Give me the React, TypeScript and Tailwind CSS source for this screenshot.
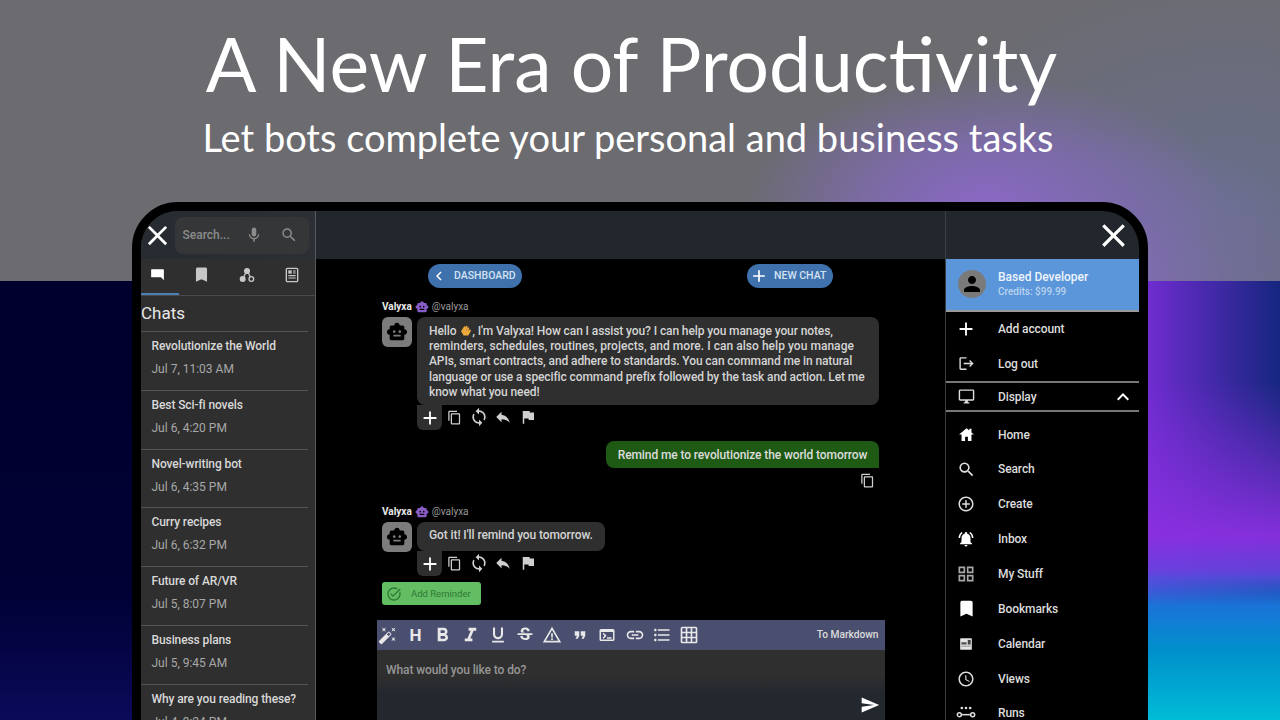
import React from "react";
import {
  MdClose, MdMic, MdSearch, MdBookmark, MdChevronLeft, MdAdd, MdContentCopy, MdSync, MdReply, MdFlag,
  MdAutoFixHigh, MdFormatBold, MdFormatItalic, MdFormatUnderlined, MdStrikethroughS, MdWarningAmber, MdFormatQuote,
  MdLink, MdFormatListBulleted, MdGridOn, MdSend, MdPerson, MdLogout, MdOutlineDesktopWindows, MdExpandLess,
  MdAddCircleOutline, MdNotificationsActive, MdOutlineGridView, MdOutlineSchedule,
  MdSmartToy, MdOutlineTaskAlt, MdOutlineTerminal,
} from "react-icons/md";

const chats = [
  ["Revolutionize the World", "Jul 7, 11:03 AM"],
  ["Best Sci-fi novels", "Jul 6, 4:20 PM"],
  ["Novel-writing bot", "Jul 6, 4:35 PM"],
  ["Curry recipes", "Jul 6, 6:32 PM"],
  ["Future of AR/VR", "Jul 5, 8:07 PM"],
  ["Business plans", "Jul 5, 9:45 AM"],
  ["Why are you reading these?", "Jul 4, 9:24 PM"],
];

function ChatTail({ className }: { className?: string }) {
  return (
    <svg viewBox="0 0 24 24" className={className} fill="currentColor">
      <path d="M3 5.500Q3 4.500 4 4.500h16q1 0 1 1V20l-4-4H4q-1 0-1-1z" />
    </svg>
  );
}

function Nodes({ className }: { className?: string }) {
  return (
    <svg viewBox="0 0 24 24" className={className} fill="currentColor">
      <circle cx="12" cy="6" r="4.500" />
      <circle cx="5.500" cy="18" r="4.500" />
      <circle cx="18.500" cy="18" r="3.500" fill="none" stroke="currentColor" strokeWidth="2" />
      <path d="M10 9l-3 6M14 9l3 6" stroke="currentColor" strokeWidth="2" />
    </svg>
  );
}

function Article({ className }: { className?: string }) {
  return (
    <svg viewBox="0 0 24 24" className={className}>
      <rect x="3.500" y="2" width="17" height="20" rx="1.500" fill="none" stroke="currentColor" strokeWidth="2" />
      <rect x="6.500" y="5" width="5" height="5" fill="currentColor" />
      <path d="M13.500 6h4M13.500 9h4M6.500 13h11M6.500 16.500h11" stroke="currentColor" strokeWidth="1.800" />
    </svg>
  );
}

function Runs({ className }: { className?: string }) {
  return (
    <svg viewBox="0 0 24 24" className={className} fill="none" stroke="currentColor" strokeWidth="1.800">
      <circle cx="7" cy="6" r="1.600" fill="currentColor" stroke="none" />
      <circle cx="12" cy="6" r="1.600" fill="currentColor" stroke="none" />
      <circle cx="17" cy="6" r="1.600" fill="currentColor" stroke="none" />
      <circle cx="4" cy="14" r="2.400" />
      <circle cx="20" cy="14" r="2.400" />
      <path d="M6.500 14h11" />
    </svg>
  );
}

function CalendarIcon({ className }: { className?: string }) {
  return (
    <svg viewBox="0 0 24 24" className={className}>
      <rect x="2" y="2" width="20" height="20" rx="1.500" fill="#e4e4e4" />
      <rect x="4" y="9" width="9" height="4" fill="#555" />
      <rect x="15" y="5" width="5" height="8" fill="#444" />
      <rect x="4" y="15" width="16" height="1.500" fill="#888" />
    </svg>
  );
}

function HomeIcon({ className }: { className?: string }) {
  return (
    <svg viewBox="0 0 24 24" className={className} fill="currentColor">
      <path d="M12 3L1.500 12H5v9h5v-6h4v6h5v-9h3.500L19 9V4h-3v2.300z" />
    </svg>
  );
}

function Wave() {
  return (
    <svg viewBox="0 0 16 16" className="inline-block w-[13px] h-[13px] align-[-2px]" fill="none" stroke="#eda93c" strokeLinecap="round" strokeWidth="2.400">
      <path d="M4 9l3-5M6.500 10l3-6.500M9 11l2.500-5.500M11 12l2.500-4" />
      <path d="M4 9.500l2 4h5l2-4z" fill="#eda93c" stroke="#eda93c" strokeWidth="1.500" />
    </svg>
  );
}

function Actions() {
  return (
    <div className="flex items-start h-[25px] text-[#cfcfcf]">
      <div className="w-[25px] h-[25px] bg-[#2f2f2f] rounded-b-[6px] flex items-center justify-center text-white">
        <MdAdd size={22} />
      </div>
      <div className="flex items-center h-[24px]">
        <div className="w-[24.500px] flex justify-center"><MdContentCopy size={15} /></div>
        <div className="w-[24.500px] flex justify-center"><MdSync size={20} /></div>
        <div className="w-[24.500px] flex justify-center"><MdReply size={18} /></div>
        <div className="w-[24.500px] flex justify-center"><MdFlag size={18} /></div>
      </div>
    </div>
  );
}

function Who() {
  return (
    <div className="flex items-center h-[11px] text-[10px] leading-[11px]">
      <span className="font-bold text-[#e8e8e8]">Valyxa</span>
      <MdSmartToy size={14} className="text-[#8a5cc8] mx-[3px]" />
      <span className="text-[#9a9a9a]">@valyxa</span>
    </div>
  );
}

function Avatar() {
  return (
    <div className="w-[30px] h-[30px] shrink-0 rounded-[6px] bg-[#7c7c7c] flex items-center justify-center text-black">
      <MdSmartToy size={22} />
    </div>
  );
}

const topNav = [
  { icon: <MdAdd size={22} className="text-white" />, label: "Add account" },
  { icon: <MdLogout size={17} />, label: "Log out" },
];
const mainNav = [
  { icon: <HomeIcon className="w-[17px] h-[17px] text-white" />, label: "Home" },
  { icon: <MdSearch size={19} />, label: "Search" },
  { icon: <MdAddCircleOutline size={18} />, label: "Create" },
  { icon: <MdNotificationsActive size={18} className="text-white" />, label: "Inbox" },
  { icon: <MdOutlineGridView size={20} className="text-[#a8a8a8]" />, label: "My Stuff" },
  { icon: <MdBookmark size={21} className="text-white" />, label: "Bookmarks" },
  { icon: <CalendarIcon className="w-[14px] h-[14px]" />, label: "Calendar" },
  { icon: <MdOutlineSchedule size={18} />, label: "Views" },
  { icon: <Runs className="w-[20px] h-[20px]" />, label: "Runs" },
];

function NavRow({ icon, label }: { icon: React.ReactNode; label: string }) {
  return (
    <div className="flex items-center h-[34.850px] shrink-0">
      <div className="w-[40px] flex justify-center text-[#dedede]">{icon}</div>
      <span className="ml-[12px] text-[12px] tracking-[-0.1px] font-medium text-[#dcdcdc]">{label}</span>
    </div>
  );
}

export default function App() {
  return (
    <div
      className="w-[1280px] h-[720px] overflow-hidden flex flex-col items-center bg-no-repeat font-['Roboto',sans-serif]
      bg-[radial-gradient(ellipse_240px_130px_at_985px_205px,rgba(138,104,196,1)_0%,rgba(128,106,180,0.8)_45%,rgba(112,106,150,0)_100%),radial-gradient(ellipse_260px_160px_at_1090px_290px,rgba(138,108,196,0.9)_0%,rgba(120,110,170,0.5)_55%,rgba(110,112,150,0)_100%),radial-gradient(ellipse_330px_230px_at_1230px_200px,rgba(104,112,150,0.7)_0%,rgba(104,112,150,0)_100%),linear-gradient(#6b6b70,#6b6b70),linear-gradient(180deg,rgba(26,110,216,0)_290px,#1a74d8_325px,#0090cc_370px,#00bcd6_439px),linear-gradient(180deg,rgba(138,48,224,0)_100px,rgba(138,48,224,0.95)_255px,rgba(100,70,224,0.9)_295px,rgba(100,70,224,0)_325px),linear-gradient(90deg,#6f2cd0_0%,#15267f_100%),linear-gradient(180deg,#00002c_0%,#000034_70%,#0a0a5a_100%)]
      [background-size:100%_281px,100%_281px,100%_281px,100%_281px,132px_439px,132px_439px,132px_439px,100%_439px]
      [background-position:0_0,0_0,0_0,0_0,right_bottom,right_bottom,right_bottom,0_bottom]"
    >
      <h1 className="mt-[19px] mr-[17px] h-[88px] leading-[88px] text-[75px] text-white font-['Lato',sans-serif] whitespace-nowrap">
        A New Era of Productivity
      </h1>
      <h2 className="mt-[7px] mr-[24px] h-[46px] leading-[46px] text-[38px] text-white font-['Lato',sans-serif] whitespace-nowrap">
        Let bots complete your personal and business tasks
      </h2>
      <div className="mt-[42px] w-[1016px] h-[560px] shrink-0 border-[9px] border-black rounded-t-[46px] overflow-hidden flex bg-black">
        {/* left */}
        <aside className="w-[175px] shrink-0 bg-[#2f2f2f] border-r border-[#55595e] flex flex-col">
          <div className="h-[48px] shrink-0 flex items-center bg-[linear-gradient(90deg,#262b31,#2c3034)]">
            <MdClose size={33} className="text-white shrink-0 -ml-[0.500px]" />
            <div className="ml-[1px] w-[134px] h-[37px] bg-[#353638] rounded-[8px] flex items-center text-[#8c8c8c]">
              <span className="ml-[8px] text-[12px] w-[58px] font-medium">Search...</span>
              <MdMic size={18} className="ml-[4px]" />
              <MdSearch size={18} className="ml-[17px]" />
            </div>
          </div>
          <div className="h-[37px] shrink-0 flex flex-col border-b border-[#4a4a4a]">
            <div className="flex-1 flex items-center pb-[3px] text-[#c8c8c8]">
              <div className="w-[32px] flex justify-center text-white"><ChatTail className="w-[17px] h-[17px]" /></div>
              <div className="w-[56px] flex justify-center"><MdBookmark size={19} /></div>
              <div className="w-[36px] flex justify-center"><Nodes className="w-[16px] h-[16px]" /></div>
              <div className="ml-[4px] w-[46px] flex justify-center"><Article className="w-[16px] h-[16px]" /></div>
            </div>
            <div className="w-[38px] h-[2px] bg-[#4a7fb5]" />
          </div>
          <div className="h-[36px] shrink-0 flex items-center text-[17px] text-[#e8e8e8] leading-none w-[167px] border-b border-[#555]">Chats</div>
          {chats.map(([t, d]) => (
            <div key={t} className="h-[58.830px] shrink-0 w-[167px] border-b border-[#555] pl-[10.500px] pt-[6px]">
              <div className="text-[12px] leading-[16px] tracking-[-0.1px] font-medium text-[#d8d8d8] whitespace-nowrap">{t}</div>
              <div className="mt-[7px] text-[12px] leading-[16px] font-normal text-[#a8a8a8] whitespace-nowrap">{d}</div>
            </div>
          ))}
        </aside>
        {/* main */}
        <main className="flex-1 min-w-0 flex flex-col bg-black">
          <div className="h-[48px] shrink-0 bg-[#22272e]" />
          <div className="mt-[5px] w-[405px] mx-auto flex justify-between shrink-0">
            <div className="w-[94px] h-[24px] rounded-full bg-[#3f72ad] flex items-center text-[#d3e1f1] text-[10.500px] font-medium">
              <MdChevronLeft size={18} className="ml-[2px] text-white" />
              <span className="ml-[6px]">DASHBOARD</span>
            </div>
            <div className="w-[86px] h-[24px] rounded-full bg-[#3f72ad] flex items-center text-[#d3e1f1] text-[10.500px] font-medium">
              <MdAdd size={20} className="ml-[2px] text-white" />
              <span className="ml-[5px]">NEW CHAT</span>
            </div>
          </div>
          <div className="w-[497px] mx-auto shrink-0 flex flex-col mt-[13px]">
            <Who />
            <div className="mt-[5px] flex gap-[5px]">
              <Avatar />
              <div className="flex-1">
                <div className="h-[88px] bg-[#2f2f2f] rounded-[8px] px-[12px] pt-[6.500px] text-[12px] leading-[15.400px] font-medium text-[#d4d4d4] tracking-[-0.1px] whitespace-nowrap">
                  <div>Hello <Wave />, I'm Valyxa! How can I assist you? I can help you manage your notes,</div>
                  <div className="tracking-[0.04px]">reminders, schedules, routines, projects, and more. I can also help you manage</div>
                  <div>APIs, smart contracts, and adhere to standards. You can command me in natural</div>
                  <div>language or use a specific command prefix followed by the task and action. Let me</div>
                  <div>know what you need!</div>
                </div>
                <Actions />
              </div>
            </div>
            <div className="mt-[11px] self-end w-[273px] h-[27px] bg-[#1e5a14] rounded-t-[8px] rounded-bl-[8px] flex items-center justify-center text-[12px] tracking-[-0.1px] font-medium text-[#dcdcdc] whitespace-nowrap">
              Remind me to revolutionize the world tomorrow
            </div>
            <div className="mt-[4px] h-[16px] self-end pr-[4px] text-[#cfcfcf] flex items-center"><MdContentCopy size={15} /></div>
            <div className="mt-[18px]"><Who /></div>
            <div className="mt-[5px] flex gap-[5px]">
              <Avatar />
              <div>
                <div className="h-[29px] bg-[#2f2f2f] rounded-[8px] px-[12px] pb-[3px] flex items-center text-[12px] tracking-[-0.1px] font-medium text-[#d4d4d4] whitespace-nowrap">
                  Got it! I'll remind you tomorrow.
                </div>
                <Actions />
              </div>
            </div>
            <div className="mt-[6px] w-[99px] h-[23px] bg-[#62bd63] rounded-[3px] flex items-center text-[#2f7a35] text-[9.500px]">
              <MdOutlineTaskAlt size={16} className="ml-[4px]" />
              <span className="ml-[9px] mt-[1px]">Add Reminder</span>
            </div>
          </div>
          <div className="mt-[15px] w-[508px] mx-auto shrink-0">
            <div className="h-[30px] bg-[#4a4e6f] flex items-center text-[#e8e8e8]">
              <div className="w-[22px] flex justify-center"><MdAutoFixHigh size={19} /></div>
              <div className="ml-[3.300px] flex items-center">
                <div className="w-[27.400px] flex justify-center text-[17px] font-bold leading-none">H</div>
                <div className="w-[27.400px] flex justify-center"><MdFormatBold size={23} /></div>
                <div className="w-[27.400px] flex justify-center"><MdFormatItalic size={23} /></div>
                <div className="w-[27.400px] flex justify-center"><MdFormatUnderlined size={20} /></div>
                <div className="w-[27.400px] flex justify-center"><MdStrikethroughS size={20} /></div>
                <div className="w-[27.400px] flex justify-center"><MdWarningAmber size={20} /></div>
                <div className="w-[27.400px] flex justify-center"><MdFormatQuote size={18} /></div>
                <div className="w-[27.400px] flex justify-center"><MdOutlineTerminal size={18} /></div>
                <div className="w-[27.400px] flex justify-center"><MdLink size={20} /></div>
                <div className="w-[27.400px] flex justify-center"><MdFormatListBulleted size={20} /></div>
                <div className="w-[27.400px] flex justify-center"><MdGridOn size={20} /></div>
              </div>
              <span className="ml-auto mr-[6px] text-[10.200px] font-medium text-[#dcdcdc]">To Markdown</span>
            </div>
            <div className="h-[100px] bg-[linear-gradient(#2f2f2f_0%,#2f2f2f_25%,#23272e_45%,#23272e_100%)] relative">
              <div className="pl-[9.500px] pt-[11px] text-[12px] tracking-[-0.1px] font-medium text-[#969696]">What would you like to do?</div>
              <MdSend size={20} className="absolute right-[5px] top-[45px] text-white" />
            </div>
          </div>
        </main>
        {/* right */}
        <aside className="w-[194px] shrink-0 border-l border-[#3a3f45] flex flex-col bg-black">
          <div className="h-[48px] shrink-0 bg-[#22272e] flex items-center justify-end pr-[6px]">
            <MdClose size={39} className="text-white" />
          </div>
          <div className="h-[52.500px] shrink-0 bg-[#5a96d9] border-b-2 border-[#9a9a9a] flex items-center">
            <div className="ml-[12px] w-[28px] h-[28px] rounded-full bg-[#7a7a7a] flex items-center justify-center text-black"><MdPerson size={24} /></div>
            <div className="ml-[12px]">
              <div className="text-[12px] leading-[15px] font-medium text-[#eef4fb]">Based Developer</div>
              <div className="text-[10px] leading-[13px] text-[#b9d4f0] font-medium">Credits: $99.99</div>
            </div>
          </div>
          <div className="flex flex-col">
            <NavRow {...topNav[0]} />
            <NavRow {...topNav[1]} />
          </div>
          <div className="flex items-center h-[31px] shrink-0 border-y-2 border-[#777]">
            <div className="w-[40px] flex justify-center text-[#dcdcdc]"><MdOutlineDesktopWindows size={17} /></div>
            <span className="ml-[12px] text-[12px] tracking-[-0.1px] font-medium text-[#dcdcdc]">Display</span>
            <MdExpandLess size={24} className="ml-auto mr-[4px] text-white" />
          </div>
          <div className="mt-[5px] flex flex-col">
            {mainNav.map((n) => <NavRow key={n.label} {...n} />)}
          </div>
        </aside>
      </div>
    </div>
  );
}
